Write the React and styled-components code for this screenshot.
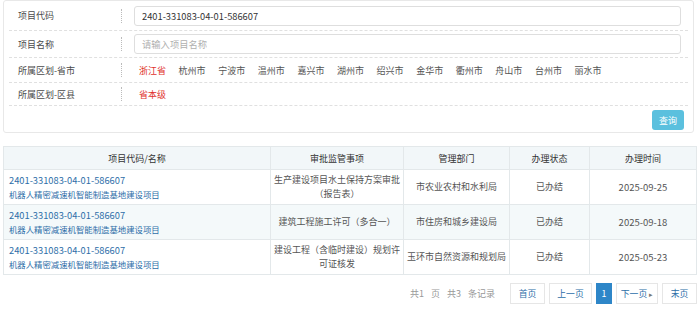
import styled, { createGlobalStyle } from "styled-components";

const Global = createGlobalStyle`
  body {
    margin: 0;
    background: #fff;
    font-family: "Microsoft YaHei", "Noto Sans CJK SC", "Noto Sans", sans-serif;
    font-size: 9px;
    color: #555;
  }
`;

const cities = ["杭州市", "宁波市", "温州市", "嘉兴市", "湖州市", "绍兴市", "金华市", "衢州市", "舟山市", "台州市", "丽水市"];

const rows = [
  { item: ["生产建设项目水土保持方案审批", "（报告表）"], dept: "市农业农村和水利局", date: "2025-09-25" },
  { item: ["建筑工程施工许可（多合一）"], dept: "市住房和城乡建设局", date: "2025-09-18" },
  { item: ["建设工程（含临时建设）规划许", "可证核发"], dept: "玉环市自然资源和规划局", date: "2025-05-23" },
];

const App = () => {
  return (
    <Page>
      <Global />
      <Panel>
        <FormRow h={30}>
          <Label>项目代码</Label>
          <Field>
            <Input defaultValue="2401-331083-04-01-586607" />
          </Field>
        </FormRow>
        <FormRow h={27}>
          <Label>项目名称</Label>
          <Field>
            <Input placeholder="请输入项目名称" />
          </Field>
        </FormRow>
        <FormRow h={25}>
          <Label>所属区划-省市</Label>
          <Field>
            <Region active>浙江省</Region>
            {cities.map((c) => (
              <Region key={c}>{c}</Region>
            ))}
          </Field>
        </FormRow>
        <FormRow h={23}>
          <Label>所属区划-区县</Label>
          <Field>
            <Region active>省本级</Region>
          </Field>
        </FormRow>
        <ButtonBar>
          <SearchBtn>查询</SearchBtn>
        </ButtonBar>
      </Panel>

      <Table>
        <colgroup>
          <col style={{ width: 267 }} />
          <col style={{ width: 133 }} />
          <col style={{ width: 106 }} />
          <col style={{ width: 80 }} />
          <col />
        </colgroup>
        <thead>
          <tr>
            <Th>项目代码/名称</Th>
            <Th>审批监管事项</Th>
            <Th>管理部门</Th>
            <Th>办理状态</Th>
            <Th>办理时间</Th>
          </tr>
        </thead>
        <tbody>
          {rows.map((r, i) => (
            <Tr key={i} striped={i % 2 === 1}>
              <NameCell>
                <Code>2401-331083-04-01-586607</Code>
                <ProjName>机器人精密减速机智能制造基地建设项目</ProjName>
              </NameCell>
              <Td>
                {r.item.map((l) => (
                  <Line key={l}>{l}</Line>
                ))}
              </Td>
              <Td>{r.dept}</Td>
              <Td>已办结</Td>
              <Td num>{r.date}</Td>
            </Tr>
          ))}
        </tbody>
      </Table>

      <Pager>
        <PageInfo>
          <span>共1</span>
          <span>页</span>
          <span>共3</span>
          <span>条记录</span>
        </PageInfo>
        <PageBtn w={35}>首页</PageBtn>
        <PageBtn w={43}>上一页</PageBtn>
        <PageBtn w={16} current>1</PageBtn>
        <PageBtn w={42}>下一页<Arrow>▸</Arrow></PageBtn>
        <PageBtn w={35}>末页</PageBtn>
      </Pager>
    </Page>
  );
};

export default App;

const Page = styled.div`
  width: 694px;
  padding: 0 3px;
`;

const Panel = styled.div`
  border: 1px solid #e8e8e8;
  border-radius: 3px;
  padding: 0 5px;
  margin-right: 3px;
  height: 133px;
  box-sizing: border-box;
`;

const FormRow = styled.div`
  display: flex;
  align-items: center;
  height: ${({ h }) => h}px;
  box-sizing: border-box;
  border-bottom: 1px dashed #e0e0e0;
`;

const Label = styled.div`
  width: 113px;
  padding-left: 9px;
  box-sizing: border-box;
  color: #4a4a4a;
  font-size: 9px;
  position: relative;
  &::after {
    content: "";
    position: absolute;
    right: 0;
    top: 50%;
    transform: translateY(-50%);
    height: 14px;
    border-right: 1px dotted #bbb;
  }
`;

const Field = styled.div`
  flex: 1;
  display: flex;
  align-items: center;
  padding-left: 12px;
  padding-right: 7px;
`;

const Input = styled.input`
  width: 100%;
  height: 20px;
  box-sizing: border-box;
  border: 1px solid #dedede;
  border-radius: 3px;
  padding: 0 7px;
  font-family: inherit;
  font-size: 9.3px;
  color: #333;
  outline: none;
  &::placeholder {
    color: #b0b0b0;
  }
`;

const Region = styled.span`
  font-size: 9px;
  color: ${({ active }) => (active ? "#e0322c" : "#555")};
  width: 39.6px;
  flex: none;
  white-space: nowrap;
  &:first-child {
    margin-left: 5px;
  }
`;

const ButtonBar = styled.div`
  display: flex;
  justify-content: flex-end;
  padding: 4px 4px 0 0;
`;

const SearchBtn = styled.button`
  width: 32px;
  height: 20px;
  border: none;
  border-radius: 3px;
  background: #5bc0de;
  color: #fff;
  font-family: inherit;
  font-size: 9px;
  padding: 0;
`;

const Table = styled.table`
  margin-top: 13px;
  width: 100%;
  border-collapse: collapse;
  table-layout: fixed;
  border: 1px solid #e3e8ea;
`;

const Th = styled.th`
  height: 22px;
  background: #f2f7f9;
  color: #333;
  font-weight: normal;
  font-size: 9px;
  border: 1px solid #e3e8ea;
  padding: 0;
`;

const Tr = styled.tr`
  background: ${({ striped }) => (striped ? "#f4f9fa" : "#fff")};
`;

const Td = styled.td`
  height: 34px;
  text-align: center;
  border: 1px solid #e3e8ea;
  font-size: ${({ num }) => (num ? "9.5px" : "9px")};
  line-height: 14px;
  color: #555;
  padding: 0 2px;
`;

const Line = styled.div`
  white-space: nowrap;
`;

const NameCell = styled(Td)`
  text-align: left;
  padding: 0 5px;
`;

const Code = styled.div`
  color: #2d6ea8;
  font-size: 9.3px;
  line-height: 14px;
`;

const ProjName = styled.div`
  color: #2d6ea8;
  font-size: 8.4px;
  line-height: 14px;
`;

const Pager = styled.div`
  display: flex;
  justify-content: flex-end;
  align-items: center;
  gap: 4px;
  margin-top: 8px;
`;

const PageInfo = styled.span`
  display: flex;
  gap: 7px;
  color: #999;
  font-size: 9px;
  margin-right: 11px;
`;

const PageBtn = styled.span`
  width: ${({ w }) => w}px;
  height: 21px;
  box-sizing: border-box;
  display: flex;
  align-items: center;
  justify-content: center;
  border: 1px solid ${({ current }) => (current ? "#2e86c8" : "#e6e6e6")};
  background: ${({ current }) => (current ? "#2e86c8" : "#fff")};
  color: ${({ current }) => (current ? "#fff" : "#2d6ea8")};
  font-size: 8.8px;
  white-space: nowrap;
`;

const Arrow = styled.span`
  color: #777;
  font-size: 7px;
  margin-left: 2px;
`;
